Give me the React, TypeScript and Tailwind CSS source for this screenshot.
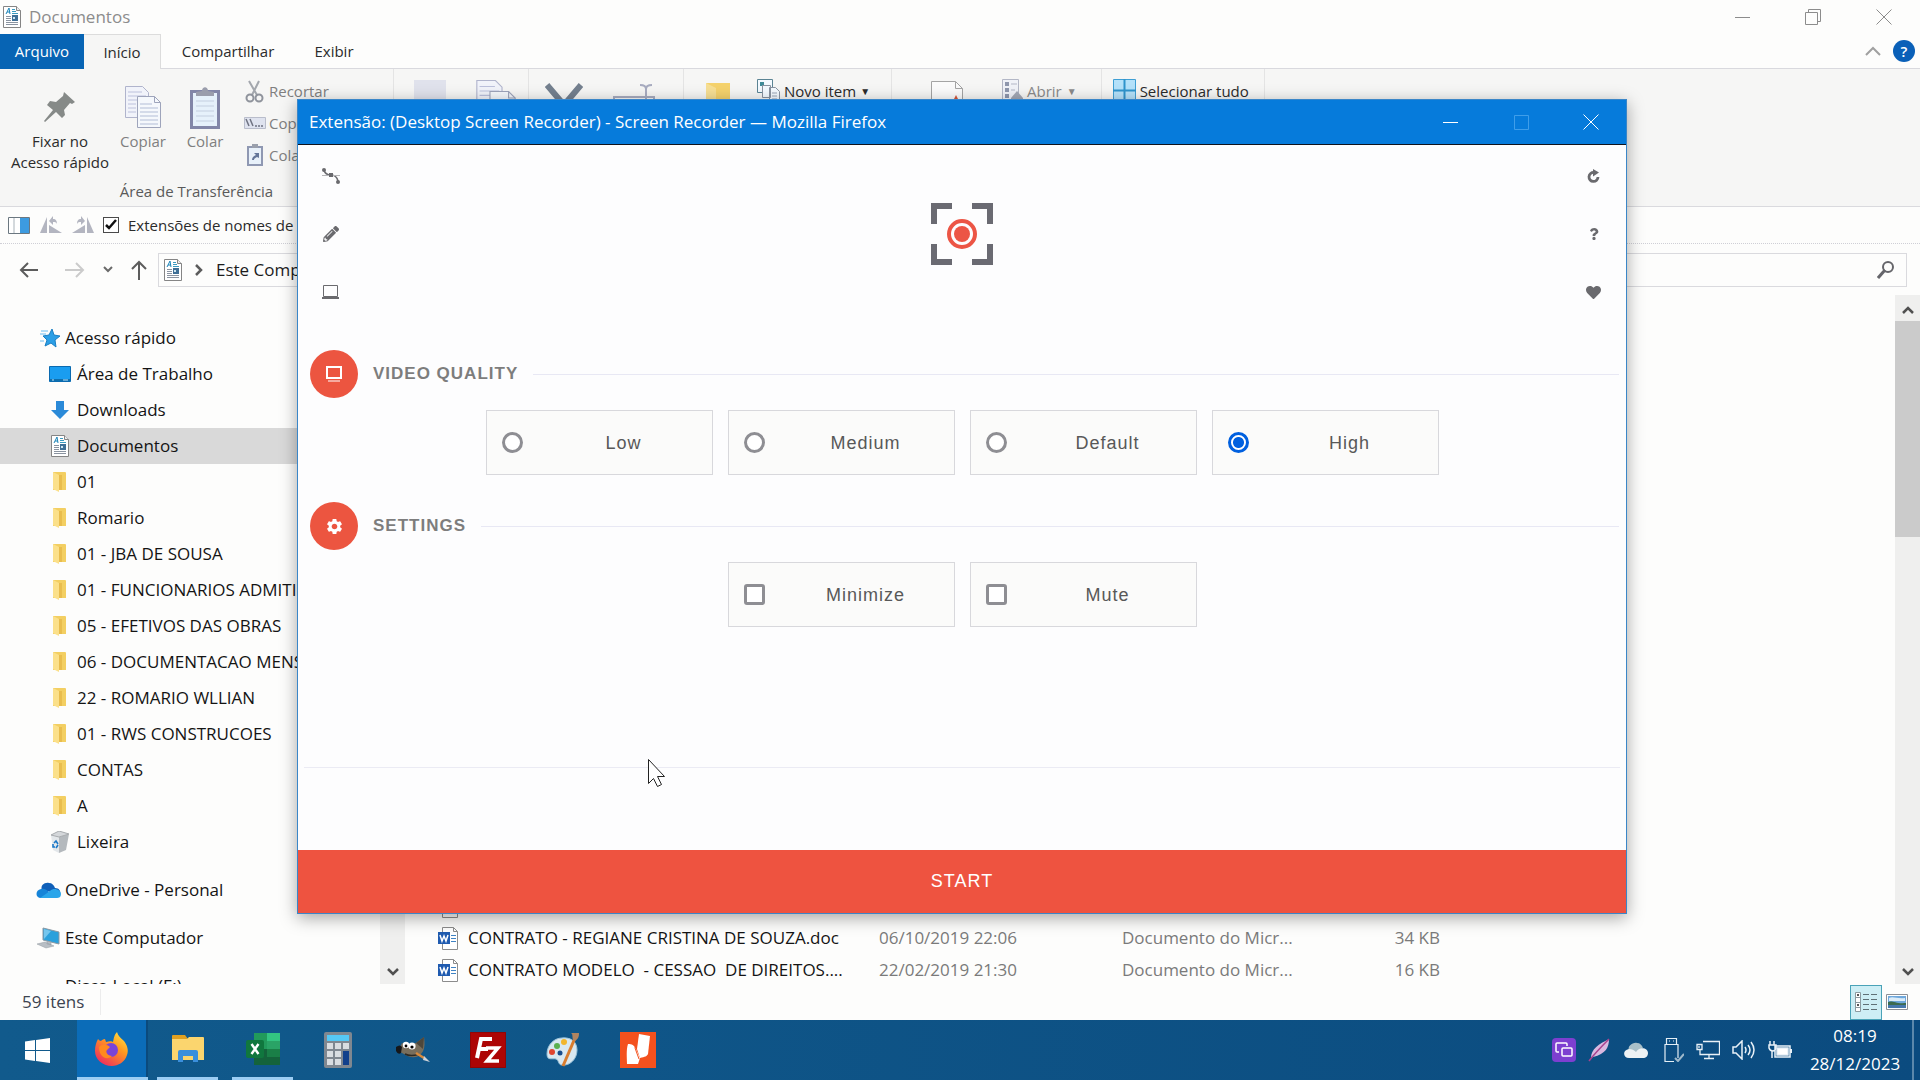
import { useState } from 'react'
import type { ReactNode } from 'react'
import { FaHeart, FaPencilAlt, FaQuestion } from 'react-icons/fa'
import { MdSettings } from 'react-icons/md'

const UI_FONT = "font-['Open_Sans','Noto_Sans',sans-serif]"
const WEB_FONT = "font-['Liberation_Sans',Arial,sans-serif]"

function DocIcon() {
  return (
    <svg width="18" height="22" viewBox="0 0 18 22" className="shrink-0">
      <path d="M.5.5h13l4 4v17H.5z" fill="#fff" stroke="#858585" />
      <path d="M13.5.5v4h4" fill="#eee" stroke="#858585" />
      <path d="M3 8l3-6 1 6M4 6h3" stroke="#1b84b8" fill="none" />
      <path d="M9 3.500h3M9 5.500h4M9 7.500h6" stroke="#3a9ac0" />
      <path d="M3 10.500h5M3 12.500h5M3 14.500h5M3 16.500h12M3 18.500h12" stroke="#8a93a0" />
      <path d="M9 9h6v6H9z" fill="#3f6f96" />
      <path d="M10 11h2v2h-2z" fill="#cfe6f0" />
    </svg>
  )
}

function FolderIcon() {
  return (
    <svg width="22" height="22" viewBox="0 0 22 22" className="shrink-0">
      <path d="M4 1h12a1 1 0 0 1 1 1v17H4z" fill="#f3cf62" />
      <path d="M4 1l6 3v17l-6-3z" fill="#fbe08a" />
      <path d="M10 4h3v15h-3z" fill="#e9bd4e" />
    </svg>
  )
}

function StarIcon() {
  return (
    <svg width="20" height="20" viewBox="0 0 20 20" className="shrink-0">
      <path d="M12 1l2 6 6 1-5 4 1 7-5-4-6 3 2-6-4-4 6-1z" fill="#2b9fe6" stroke="#1a7fc4" />
      <path d="M1 3h7M0 6h6M0 13h4" stroke="#6bbcf0" />
    </svg>
  )
}

function DesktopIcon() {
  return (
    <svg width="22" height="17" viewBox="0 0 22 17" className="shrink-0">
      <path d="M.5.5h21v15H.5z" fill="#1a9df0" stroke="#0a6ab0" />
      <path d="M1 13h20v2H1z" fill="#0d6fae" />
      <path d="M3 14h2M14 14h5" stroke="#bfe4fb" />
    </svg>
  )
}

function DownloadIcon() {
  return (
    <svg width="20" height="20" viewBox="0 0 20 20" className="shrink-0">
      <path d="M6 1h8v9h5l-9 9-9-9h5z" fill="#2b8ad8" />
    </svg>
  )
}

function BinIcon() {
  return (
    <svg width="22" height="22" viewBox="0 0 22 22" className="shrink-0">
      <path d="M2 4l8 2v16l-6-3z" fill="#e3e7ea" />
      <path d="M10 6l10-3-3 16-7 3z" fill="#b4b9bd" />
      <path d="M2 4l8-4 10 3-10 3z" fill="#d4d7da" stroke="#a7abae" />
      <path d="M5 12l2-2 2 3M4 13v3h2M9 14l-2 3" stroke="#1a78c8" strokeWidth="1.600" fill="none" />
    </svg>
  )
}

function CloudIcon() {
  return (
    <svg width="25" height="17" viewBox="0 0 25 17" className="shrink-0">
      <path d="M6 8C4 3 9 0 13 1c3 0 5 2 6 5 4 0 6 3 5 6z" fill="#0f5fb8" />
      <path d="M5 16C-1 16-1 8 5 7c3-1 6 1 8 3l-3 6z" fill="#1684d8" />
      <path d="M4 16l10-7c4-4 11-1 11 3 0 3-2 4-4 4z" fill="#2aa5ea" />
    </svg>
  )
}

function ComputerIcon() {
  return (
    <svg width="24" height="22" viewBox="0 0 24 22" className="shrink-0">
      <path d="M7 1l16 4v12L7 13z" fill="#2aa0dc" stroke="#8b98a3" />
      <path d="M8 2l7 2-7 8z" fill="#74c6ee" />
      <path d="M1 17l8-2 9 4-8 2zM11 14l4 1v3l-4-1z" fill="#b8bec4" stroke="#929aa1" strokeWidth=".5" />
    </svg>
  )
}

function WordIcon() {
  return (
    <svg width="21" height="23" viewBox="0 0 21 23" className="shrink-0">
      <path d="M4.500.5h11l4 4v18h-15z" fill="#fff" stroke="#8c8c8c" />
      <path d="M15.500.5v4h4" fill="none" stroke="#8c8c8c" />
      <path d="M13 8.500h5M13 11.500h5M13 14.500h5" stroke="#3f83c4" />
      <path d="M0 5h12v12H0z" fill="#1f5bb0" />
      <path d="M2 8l2 6 2-5 2 5 2-6" stroke="#fff" strokeWidth="1.500" fill="none" />
    </svg>
  )
}

function PageStack({ size }: { size: number }) {
  return (
    <svg width={size} height={size + 6} viewBox="0 0 36 42" className="shrink-0">
      <path d="M.5.5h17l6 6v25H.5z" fill="#f1f3fa" stroke="#b0b4cc" />
      <path d="M3 6h14M3 10h18M3 14h10M3 18h8M3 22h8M3 26h8" stroke="#bcc1dc" />
      <path d="M12.500 10.500h17l6 6v25h-23z" fill="#f5f8fc" stroke="#9ea4bb" />
      <path d="M29.500 10.500v6h6" fill="none" stroke="#9ea4bb" />
      <path d="M15 18h12M15 22h18M15 26h18M15 30h18M15 34h18M15 38h18" stroke="#b2bdd6" />
    </svg>
  )
}

function PinIcon() {
  return (
    <svg width="32" height="32" viewBox="0 0 32 32">
      <path d="M20 1l11 10-3 2-2-1-6 7 1 5-3 3-6-6L1 31l-1-1 9-11-6-5 3-4 6 1 7-6z" fill="#868a88" />
    </svg>
  )
}

function ClipboardIcon() {
  return (
    <svg width="30" height="43" viewBox="0 0 30 43">
      <path d="M1.500 5.500h27v36h-27z" fill="#e6f1fb" stroke="#8286a8" strokeWidth="3" />
      <path d="M6 15h18M6 20h18M6 25h18M6 30h18M6 35h18" stroke="#c4cfe0" />
      <path d="M6 10V6l6-1c0-5 6-5 6 0l6 1v4z" fill="#9a9dac" />
    </svg>
  )
}

function ScissorsIcon() {
  return (
    <svg width="20" height="23" viewBox="0 0 20 23" fill="none">
      <path d="M4 1l8 14M14 1L7 15" stroke="#a3a7ad" strokeWidth="2" />
      <circle cx="5" cy="18" r="3.500" stroke="#8f939c" strokeWidth="2" />
      <circle cx="14" cy="18" r="3.500" stroke="#8f939c" strokeWidth="2" />
    </svg>
  )
}

function PathIcon() {
  return (
    <svg width="22" height="12" viewBox="0 0 22 12">
      <path d="M.5.500h21v11H.5z" fill="#dfe3ef" stroke="#b9bdcb" />
      <path d="M2 2l3 7M6 2l3 7M11 9h2M14 9h2M17 9h2" stroke="#6f7382" strokeWidth="1.500" />
    </svg>
  )
}

function ShortcutIcon() {
  return (
    <svg width="16" height="22" viewBox="0 0 16 22">
      <path d="M1 3h14v18H1z" fill="#e8f1fa" stroke="#8f98b2" strokeWidth="2" />
      <path d="M5 0h6v4H5z" fill="#9aa0ac" />
      <path d="M5 16c0-3 2-4 4-5L7 9h5v5l-2-1c-2 1-3 2-3 3z" fill="#65779a" />
    </svg>
  )
}

function MinimizeGlyph() {
  return (
    <svg width="16" height="16" viewBox="0 0 16 16" stroke="currentColor">
      <path d="M0 8.500h15" />
    </svg>
  )
}

function CloseGlyph() {
  return (
    <svg width="16" height="16" viewBox="0 0 16 16" stroke="currentColor">
      <path d="M.5.500l15 15M15.500.500l-15 15" />
    </svg>
  )
}

function Chevron({ up = false }: { up?: boolean }) {
  return (
    <svg width="12" height="10" viewBox="0 0 12 10" fill="none" stroke="#505050" strokeWidth="2.500">
      <path d={up ? 'M1 8l5-5 5 5' : 'M1 2l5 5 5-5'} />
    </svg>
  )
}

/* ---------- Explorer ---------- */

function TitleBar() {
  return (
    <header className="flex h-[34px] shrink-0 items-center pl-[3px] text-[#8c8c8c]">
      <DocIcon />
      <h1 className="pl-2 text-[17px] leading-6">Documentos</h1>
      <div className="ml-auto flex h-full">
        <button aria-label="Minimizar" className="flex w-[70px] items-center justify-center"><MinimizeGlyph /></button>
        <button aria-label="Restaurar" className="flex w-[70px] items-center justify-center">
          <svg width="16" height="16" viewBox="0 0 16 16" fill="none" stroke="currentColor">
            <path d="M.5 3.500h12v12H.5zM3.500 3.500v-3h12v12h-3" />
          </svg>
        </button>
        <button aria-label="Fechar" className="flex w-[72px] items-center justify-center"><CloseGlyph /></button>
      </div>
    </header>
  )
}

function Tabs() {
  return (
    <nav className="flex h-[35px] shrink-0 text-[15px] text-[#2b2b2b]">
      <button className="w-[84px] bg-[#0764b4] text-white">Arquivo</button>
      <button className="w-[77px] border-t border-r border-[#dcdcdc] bg-[#f6f6f5]">Início</button>
      <div className="flex flex-1 items-center border-b border-[#d9d9de]">
        <button className="w-[134px]">Compartilhar</button>
        <button className="w-[78px]">Exibir</button>
        <div className="ml-auto flex items-center gap-3 pr-[5px]">
          <button aria-label="Minimizar a faixa de opções">
            <svg width="16" height="10" viewBox="0 0 16 10" fill="none" stroke="#a0a0a0" strokeWidth="2">
              <path d="M1 9l7-7 7 7" />
            </svg>
          </button>
          <button aria-label="Ajuda" className="size-[22px] rounded-full bg-[#0a60b8] font-semibold leading-[22px] text-white">?</button>
        </div>
      </div>
    </nav>
  )
}

function RibbonButton({ icon, label, className }: { icon: ReactNode; label: string; className: string }) {
  return (
    <button className={`flex flex-col items-center pt-1 leading-[21px] ${className}`}>
      <span className="flex h-[48px] items-center">{icon}</span>
      <span>{label}</span>
    </button>
  )
}

function Ribbon() {
  return (
    <section className="flex h-[138px] shrink-0 items-stretch border-b border-[#dadade] bg-[#f6f6f5] text-[15px] text-[#2b2b2b]">
      <div className="flex w-[394px] shrink-0 flex-col border-r border-[#e4e4e4]">
        <div className="flex flex-1 pt-[10px]">
          <RibbonButton icon={<PinIcon />} label="Fixar no Acesso rápido" className="w-[120px] px-2" />
          <RibbonButton icon={<PageStack size={36} />} label="Copiar" className="w-[46px] text-[#7f7f7f]" />
          <RibbonButton icon={<ClipboardIcon />} label="Colar" className="w-[78px] text-[#7f7f7f]" />
          <div className="flex flex-col gap-2 text-[#7f7f7f]">
            <button className="flex h-6 items-center gap-[3px]"><span className="flex w-[22px] justify-center"><ScissorsIcon /></span>Recortar</button>
            <button className="flex h-6 items-center gap-[3px]"><span className="flex w-[22px] justify-center"><PathIcon /></span>Copiar</button>
            <button className="flex h-6 items-center gap-[3px]"><span className="flex w-[22px] justify-center"><ShortcutIcon /></span>Colar</button>
          </div>
        </div>
        <p className="pb-1 text-center leading-[21px] text-[#5a5a5a]">Área de Transferência</p>
      </div>
      <div className="flex items-start gap-[30px] border-r border-[#e4e4e4] pl-5 pr-3 pt-[11px]">
        <span className="h-6 w-8 bg-[#e0e2ec]" />
        <PageStack size={40} />
      </div>
      <div className="flex items-start gap-[30px] border-r border-[#e4e4e4] pl-4 pr-7 pt-[14px]">
        <svg width="38" height="36" viewBox="0 0 38 36" fill="none" stroke="#74808f" strokeWidth="6">
          <path d="M2 2l17 20L36 2" />
        </svg>
        <svg width="42" height="36" viewBox="0 0 42 36" fill="none" stroke="#a8acc0" strokeWidth="2">
          <path d="M1 30V14h40v16M27 2c3 0 6 1 6 4 0-3 3-4 6-4M33 6v26" />
          <path d="M4 17h22v14H4z" fill="#dfe6f2" stroke="none" />
        </svg>
      </div>
      <div className="flex items-start border-r border-[#e4e4e4] pl-[22px] pt-[10px]">
        <svg width="26" height="30" viewBox="0 0 26 30" className="mt-1">
          <path d="M0 0h24v30H5z" fill="#f5d26c" />
          <path d="M0 0l10 5v25l-10-5z" fill="#f7df94" />
        </svg>
        <button className="ml-[25px] flex w-[134px] items-start gap-1 leading-6">
          <svg width="23" height="24" viewBox="0 0 23 24" fill="#f4faff">
            <path d="M.5.500h15v13H.5z" stroke="#5b8494" />
            <path d="M3 3h4v4H3z" fill="#3f8b98" />
            <path d="M5.500 6.500h8v12h-8zM12.500 8.500h6l4 4v11h-10z" stroke="#8a93a0" />
            <path d="M15 14h5M15 17h5M15 20h5" stroke="#9aa6b8" />
          </svg>
          Novo item <span className="text-[10px]">▼</span>
        </button>
      </div>
      <div className="flex items-start border-r border-[#e4e4e4] pl-[38px] pr-6 pt-[10px]">
        <svg width="34" height="36" viewBox="0 0 34 36" className="mt-[2px] mr-[38px]">
          <path d="M1.500.500h24l7 7v28h-31z" fill="#fbfbfb" stroke="#a4a4a4" />
          <path d="M25.500.500v7h7" fill="none" stroke="#a4a4a4" />
          <path d="M24 18l2-4 2 4z" fill="#d5583c" />
        </svg>
        <button className="flex items-start gap-[3px] leading-6 text-[#8a8a8a]">
          <svg width="22" height="24" viewBox="0 0 22 24">
            <path d="M.5.500h16v23H.5z" fill="#f0f2f8" stroke="#b3b7c6" />
            <path d="M3 3h4v4H3zM3 9h4v4H3zM3 15h4v4H3z" fill="#8f97ad" />
            <path d="M9 5h6M9 11h4" stroke="#b3b7c6" />
            <path d="M9 19l6-7 6 7v4H9z" fill="#a3a8b5" />
          </svg>
          Abrir <span className="pl-[2px] text-[10px]">▼</span>
        </button>
      </div>
      <div className="flex items-start border-r border-[#e4e4e4] pt-[10px] pr-[15px] pl-[11px]">
        <button className="flex items-start gap-1 leading-6">
          <svg width="23" height="23" viewBox="0 0 23 23">
            <path d="M.5.500h22v22H.5z" fill="#b4e1fa" stroke="#3f9fd4" />
            <path d="M11.500 0v23M0 11.500h23" stroke="#2f94cc" strokeWidth="2" />
          </svg>
          Selecionar tudo
        </button>
      </div>
    </section>
  )
}

function QuickAccessBar() {
  const [extensions, setExtensions] = useState(true)
  return (
    <div className="flex h-[37px] shrink-0 items-center border-b border-dotted border-[#cfcfd6] pl-2 text-[15px] text-[#2b2b2b]">
      <svg width="22" height="17" viewBox="0 0 22 17">
        <path d="M.5.500h21v16H.5z" fill="#fff" stroke="#6b7780" />
        <path d="M6 1v15" stroke="#a9b3ba" />
        <path d="M12 1h9v15h-9z" fill="#3d9be0" />
      </svg>
      <svg width="22" height="18" viewBox="0 0 22 18" className="ml-[10px]" fill="#b3b5c0">
        <path d="M0 17L7 1v16zM9 17V9l13 8zM9 5l4-5v3c3 0 4 2 4 5-1-2-2-2-4-2v3z" />
      </svg>
      <svg width="22" height="18" viewBox="0 0 22 18" className="ml-[10px] mr-[9px]" fill="#b3b5c0">
        <path d="M22 17L15 1v16zM13 17V9L0 17zM13 5L9 0v3C6 3 5 5 5 8c1-2 2-2 4-2v3z" />
      </svg>
      <label className="flex items-center gap-[9px]">
        <span className="relative flex size-4 items-center justify-center">
          <input
            type="checkbox"
            checked={extensions}
            onChange={(e) => setExtensions(e.target.checked)}
            className="size-4 appearance-none border border-[#4a4a4a] bg-white"
          />
          {extensions && (
            <svg width="12" height="12" viewBox="0 0 12 12" className="pointer-events-none absolute" fill="none" stroke="#111" strokeWidth="2.500">
              <path d="M1 6l3 3 7-8" />
            </svg>
          )}
        </span>
        Extensões de nomes de arquivos
      </label>
    </div>
  )
}

function AddressBar() {
  return (
    <div className="flex h-[51px] shrink-0 items-center gap-3 pr-[13px] text-[17px] text-[#1c1c1c]">
      <div className="flex w-[146px] shrink-0 items-center pl-[19px] text-[#606060]">
        <button aria-label="Voltar">
          <svg width="20" height="16" viewBox="0 0 20 16" fill="none" stroke="#5c5c5c" strokeWidth="2"><path d="M19 8H2M9 1L2 8l7 7" /></svg>
        </button>
        <button aria-label="Avançar" className="ml-[26px]">
          <svg width="20" height="16" viewBox="0 0 20 16" fill="none" stroke="#cbcbcb" strokeWidth="2"><path d="M0 8h18M11 1l7 7-7 7" /></svg>
        </button>
        <button aria-label="Locais recentes" className="ml-[18px]">
          <svg width="10" height="7" viewBox="0 0 10 7" fill="none" stroke="#6a6a6a" strokeWidth="2"><path d="M1 1l4 4 4-4" /></svg>
        </button>
        <button aria-label="Acima" className="ml-[18px]">
          <svg width="16" height="20" viewBox="0 0 16 20" fill="none" stroke="#5c5c5c" strokeWidth="2"><path d="M8 20V2M1 9l7-7 7 7" /></svg>
        </button>
      </div>
      <div className="flex h-[34px] flex-1 items-center border border-[#dadade] pl-[5px]">
        <DocIcon />
        <svg width="8" height="12" viewBox="0 0 8 12" className="mx-[13px]" fill="none" stroke="#5c5c5c" strokeWidth="2.500"><path d="M1 1l5 5-5 5" /></svg>
        <span>Este Computador</span>
      </div>
      <div className="flex h-[34px] w-[400px] items-center border border-[#dadade] pr-[11px]">
        <input type="text" aria-label="Pesquisar" className="h-full min-w-0 flex-1 bg-transparent outline-none" />
        <svg width="18" height="18" viewBox="0 0 18 18" fill="none" stroke="#65656a">
          <circle cx="11" cy="6" r="5" strokeWidth="2" />
          <path d="M8 9l-7 8" strokeWidth="3" />
        </svg>
      </div>
    </div>
  )
}

const pinned: { label: string; icon: ReactNode; active?: boolean }[] = [
  { label: 'Área de Trabalho', icon: <DesktopIcon /> },
  { label: 'Downloads', icon: <DownloadIcon /> },
  { label: 'Documentos', icon: <DocIcon />, active: true },
  { label: '01', icon: <FolderIcon /> },
  { label: 'Romario', icon: <FolderIcon /> },
  { label: '01 - JBA DE SOUSA', icon: <FolderIcon /> },
  { label: '01 - FUNCIONARIOS ADMITIDOS', icon: <FolderIcon /> },
  { label: '05 - EFETIVOS DAS OBRAS', icon: <FolderIcon /> },
  { label: '06 - DOCUMENTACAO MENSAL', icon: <FolderIcon /> },
  { label: '22 - ROMARIO WLLIAN', icon: <FolderIcon /> },
  { label: '01 - RWS CONSTRUCOES', icon: <FolderIcon /> },
  { label: 'CONTAS', icon: <FolderIcon /> },
  { label: 'A', icon: <FolderIcon /> },
  { label: 'Lixeira', icon: <BinIcon /> },
]

function RootItem({ icon, label }: { icon?: ReactNode; label: string }) {
  return (
    <button className="flex h-9 w-full shrink-0 items-center pl-9 text-left whitespace-nowrap">
      <span className="flex w-[29px] items-center">{icon}</span>
      {label}
    </button>
  )
}

function Sidebar() {
  return (
    <aside className="flex w-[380px] shrink-0 flex-col gap-3 overflow-hidden pt-[25px] text-[17px] text-[#141414]">
      <div>
        <RootItem icon={<span className="pl-1"><StarIcon /></span>} label="Acesso rápido" />
        {pinned.map((item) => (
          <button
            key={item.label}
            className={`flex h-9 w-full items-center pl-12 text-left whitespace-nowrap ${item.active ? 'bg-[#d9d9d9]' : ''}`}
          >
            <span className="flex w-[29px] shrink-0 items-center pr-[5px] justify-center">{item.icon}</span>
            {item.label}
          </button>
        ))}
      </div>
      <RootItem icon={<CloudIcon />} label="OneDrive - Personal" />
      <RootItem icon={<ComputerIcon />} label="Este Computador" />
      <RootItem label="Disco Local (E:)" />
    </aside>
  )
}

const files = [
  { name: '', date: '', type: '', size: '' },
  { name: 'CONTRATO - REGIANE CRISTINA DE SOUZA.doc', date: '06/10/2019 22:06', type: 'Documento do Micr...', size: '34 KB' },
  { name: 'CONTRATO MODELO  - CESSAO  DE DIREITOS....', date: '22/02/2019 21:30', type: 'Documento do Micr...', size: '16 KB' },
]

function FileList() {
  return (
    <main className="flex-1 overflow-hidden pt-[595px] pl-[33px]">
      <table className="table-fixed text-[17px] whitespace-pre">
        <tbody>
          {files.map((f, i) => (
            <tr key={i} className="h-8 text-[#7a7a7a]">
              <td className="w-[30px] p-0"><WordIcon /></td>
              <td className="w-[411px] p-0 text-[#141414]">{f.name}</td>
              <td className="w-[243px] p-0">{f.date}</td>
              <td className="w-[218px] p-0">{f.type}</td>
              <td className="w-[100px] p-0 text-right">{f.size}</td>
            </tr>
          ))}
        </tbody>
      </table>
    </main>
  )
}

function StatusBar() {
  return (
    <footer className="flex h-9 shrink-0 items-center pl-[22px] pr-3 text-[17px] text-[#3c4450]">
      <span className="border-r border-[#ececec] pr-4">59 itens</span>
      <div className="ml-auto flex items-center gap-1">
        <button aria-label="Detalhes" className="flex h-[35px] w-8 items-center justify-center border border-[#4aa3b8] bg-[#cdeef5]">
          <svg width="22" height="20" viewBox="0 0 22 20" fill="#fff" stroke="#8b9aa0">
            <path d="M.5.500h5v19h-5zM.5 5.500h5M.5 10.500h5M.5 15.500h5" />
            <path d="M8 2.500h6M16 2.500h6M8 7.500h6M16 7.500h6M8 12.500h6M16 12.500h6M8 17.500h6M16 17.500h6" stroke="#5f7076" />
            <path d="M2 2h2v2H2zM2 12h2v2H2z" fill="#555" stroke="none" />
          </svg>
        </button>
        <button aria-label="Miniaturas">
          <svg width="22" height="17" viewBox="0 0 22 17">
            <path d="M.5.500h21v15H.5z" fill="#fff" stroke="#8d9096" />
            <path d="M2 2h18v12H2z" fill="#6fa8dc" />
            <path d="M3 4c4-2 8 1 16 0v3H3z" fill="#dcecf8" />
            <path d="M2 8c5-2 7 2 18 1v2H2z" fill="#3d6b4f" />
            <path d="M2 11h18v3H2z" fill="#4678ad" />
          </svg>
        </button>
      </div>
    </footer>
  )
}

function Explorer() {
  return (
    <div className="flex min-h-0 flex-1 flex-col">
      <TitleBar />
      <Tabs />
      <Ribbon />
      <QuickAccessBar />
      <AddressBar />
      <div className="flex min-h-0 flex-1">
        <Sidebar />
        <div className="flex w-[25px] shrink-0 items-end justify-center bg-[#efefee] pb-[7px]"><Chevron /></div>
        <FileList />
        <div className="flex w-[25px] shrink-0 flex-col items-center bg-[#efefee]">
          <div className="flex h-[26px] items-center pt-1"><Chevron up /></div>
          <div className="h-[216px] w-full bg-[#cbcbcb]" />
          <div className="mt-auto pb-[7px]"><Chevron /></div>
        </div>
      </div>
      <StatusBar />
    </div>
  )
}

/* ---------- Recorder window ---------- */

function Section({ icon, title, children }: { icon: ReactNode; title: string; children: ReactNode }) {
  return (
    <section className="flex flex-col gap-3">
      <h2 className="flex items-center gap-[15px] text-[17px] font-bold tracking-[1px] text-[#7d7d7d]">
        <span className="flex size-12 items-center justify-center rounded-full bg-[#ec5540] text-white">{icon}</span>
        {title}
        <span className="h-px flex-1 bg-[#e8e8f4]" />
      </h2>
      <div className="flex justify-center gap-[15px] pr-1">{children}</div>
    </section>
  )
}

function Option({ type, label, checked, onChange }: { type: 'radio' | 'checkbox'; label: string; checked: boolean; onChange: () => void }) {
  return (
    <label className="flex h-[65px] w-[227px] items-center gap-3 border border-[#d8d8dc] bg-[#fbfbfa] pl-[15px] text-[18px] tracking-[1px] text-[#585858]">
      {type === 'radio' ? (
        <input
          type="radio"
          name="quality"
          checked={checked}
          onChange={onChange}
          className="size-[21px] appearance-none rounded-full border-[3px] border-[#8e8e93] bg-white checked:border-[#0060df] checked:bg-[radial-gradient(circle,#0060df_5px,#fff_6px)]"
        />
      ) : (
        <input
          type="checkbox"
          checked={checked}
          onChange={onChange}
          className="size-[21px] appearance-none rounded-[3px] border-[3px] border-[#8e8e93] bg-white checked:bg-[#0060df]"
        />
      )}
      <span className="flex-1 pt-[2px] text-center">{label}</span>
    </label>
  )
}

function RecorderWindow() {
  const [quality, setQuality] = useState('High')
  const [minimize, setMinimize] = useState(false)
  const [mute, setMute] = useState(false)

  return (
    <div
      role="dialog"
      aria-label="Screen Recorder"
      className="absolute top-[99px] right-[293px] bottom-[166px] left-[297px] flex flex-col border border-[#3a86c8] bg-[#fdfdfe] shadow-[0_4px_16px_rgba(0,0,0,0.35)]"
    >
      <div className="flex h-[45px] shrink-0 items-center border-b border-[#10131c] bg-[#067bdb] text-white">
        <h2 className="pl-[11px] text-[17px]">Extensão: (Desktop Screen Recorder) - Screen Recorder — Mozilla Firefox</h2>
        <div className="ml-auto flex h-full">
          <button aria-label="Minimizar" className="flex w-[70px] items-center justify-center"><MinimizeGlyph /></button>
          <button aria-label="Maximizar" disabled className="flex w-[70px] items-center justify-center text-[#3f9eea]">
            <svg width="15" height="15" viewBox="0 0 15 15" fill="none" stroke="currentColor"><path d="M.5.500h14v14H.5z" /></svg>
          </button>
          <button aria-label="Fechar" className="flex w-[70px] items-center justify-center"><CloseGlyph /></button>
        </div>
      </div>

      <div className={`flex min-h-0 flex-1 flex-col tracking-normal ${WEB_FONT}`}>
        <div className="flex h-[205px] shrink-0 justify-between px-[11px] text-[#6a6a6e]">
          <div className="flex flex-col pt-[2px]">
            <button aria-label="Vector" className="flex h-[58px] w-[43px] items-center justify-center">
              <svg width="18" height="16" viewBox="0 0 18 16" fill="currentColor">
                <path d="M2 2c1 4 3 5 7 5s6 2 7 6" fill="none" stroke="currentColor" strokeWidth="1.500" />
                <path d="M0 7.500h18" stroke="#b5b5b8" />
                <circle cx="2" cy="2" r="2" /><circle cx="16" cy="14" r="2" />
                <path d="M7 5h4v4H7z" />
              </svg>
            </button>
            <button aria-label="Edit" className="flex h-[58px] w-[43px] items-center justify-center"><FaPencilAlt size={16} /></button>
            <button aria-label="Window" className="flex h-[58px] w-[43px] items-center justify-center">
              <svg width="17" height="15" viewBox="0 0 17 15" fill="none" stroke="currentColor">
                <path d="M1.500.500h14v11h-14z" /><path d="M0 13h17" strokeWidth="2" />
              </svg>
            </button>
          </div>
          <svg width="62" height="62" viewBox="0 0 62 62" className="mt-[58px]">
            <path d="M3 21V3h18M41 3h18v18M59 41v18H41M21 59H3V41" fill="none" stroke="#6a6a72" strokeWidth="6" />
            <circle cx="31" cy="31" r="13" fill="none" stroke="#ec5545" strokeWidth="4" />
            <circle cx="31" cy="31" r="8" fill="#ec5545" />
          </svg>
          <div className="flex flex-col pt-[2px]">
            <button aria-label="Reload" className="flex h-[58px] w-[43px] items-center justify-center">
              <svg width="13" height="15" viewBox="0 0 13 15">
                <path d="M7 3.500a4.500 4.500 0 1 0 4 4.500" fill="none" stroke="currentColor" strokeWidth="2.800" />
                <path d="M6 0l6 3.500-6 4z" fill="currentColor" />
              </svg>
            </button>
            <button aria-label="Help" className="flex h-[58px] w-[43px] items-center justify-center"><FaQuestion size={12} /></button>
            <button aria-label="Donate" className="flex h-[58px] w-[43px] items-center justify-center"><FaHeart size={15} /></button>
          </div>
        </div>

        <div className="flex flex-col gap-[27px] pr-[7px] pl-3">
          <Section
            title="VIDEO QUALITY"
            icon={
              <svg width="16" height="16" viewBox="0 0 16 16" fill="none" stroke="currentColor">
                <path d="M1 1h14v11H1z" strokeWidth="2" /><path d="M2 15h12" />
              </svg>
            }
          >
            {['Low', 'Medium', 'Default', 'High'].map((q) => (
              <Option key={q} type="radio" label={q} checked={quality === q} onChange={() => setQuality(q)} />
            ))}
          </Section>
          <Section title="SETTINGS" icon={<MdSettings size={19} />}>
            <Option type="checkbox" label="Minimize" checked={minimize} onChange={() => setMinimize(!minimize)} />
            <Option type="checkbox" label="Mute" checked={mute} onChange={() => setMute(!mute)} />
          </Section>
        </div>

        <div className="mx-[6px] mt-auto h-[83px] shrink-0 border-t border-[#ebebf4]" />
        <button className="h-[63px] shrink-0 bg-[#ee5340] text-[18px] tracking-[1px] text-white">START</button>
      </div>
    </div>
  )
}

/* ---------- Taskbar ---------- */

function AppSlot({ label, open, active, children }: { label: string; open?: boolean; active?: boolean; children: ReactNode }) {
  return (
    <button aria-label={label} className="flex h-[60px] w-[75px] shrink-0 flex-col px-[2px]">
      <span className={`flex w-full flex-1 items-center justify-center ${active ? 'border-r-2 border-[#0b4a7c] bg-[#0b6cb8]' : ''}`}>{children}</span>
      {open && <span className={`h-[3px] self-stretch bg-[#9ccdf3] ${active ? '' : 'mx-[5px]'}`} />}
    </button>
  )
}

function Taskbar() {
  return (
    <nav className="flex h-[60px] shrink-0 bg-linear-to-r from-[#115a8c] to-[#0b4b7f] text-white">
      <AppSlot label="Iniciar">
        <svg width="25" height="25" viewBox="0 0 25 25" fill="#fff">
          <path d="M0 3.500l10-1.400v9.900H0zM11 2l14-2v12H11zM0 13h10v9.900L0 21.500zM11 13h14v12l-14-2z" />
        </svg>
      </AppSlot>
      <AppSlot label="Firefox" open active>
        <svg width="34" height="34" viewBox="0 0 34 34">
          <defs>
            <linearGradient id="fx" x1="1" y1="0" x2="0.300" y2="1">
              <stop offset="0" stopColor="#fff04a" /><stop offset=".45" stopColor="#ff9a20" /><stop offset="1" stopColor="#f0305c" />
            </linearGradient>
          </defs>
          <path d="M3 7c1 1 2 2 3 2 1-1 2-2 4-2l1 3c3-1 6-1 7 0 1-4 1-7 4-10 1 4 4 6 7 9 3 4 5 9 3 14-2 7-9 11-15 11C7 34 0 27 0 19c0-5 1-8 3-12z" fill="url(#fx)" />
          <circle cx="16" cy="18" r="7" fill="#7a44d8" />
          <path d="M4 15c3-3 8-3 11 0l-3 3c-2 2 1 6 5 6-5 5-13 1-13-9z" fill="#ff8a1e" />
        </svg>
      </AppSlot>
      <AppSlot label="Explorador de Arquivos" open>
        <svg width="32" height="27" viewBox="0 0 32 27">
          <path d="M0 1q0-1 1-1h12l3 4H0z" fill="#e0a020" />
          <path d="M0 4h15l2-2h14q1 0 1 1v22H0z" fill="#fbd56e" />
          <path d="M6 27V17q0-2 2-2h16q2 0 2 2v10h-5v-6H11v6z" fill="#3a8fdc" />
        </svg>
      </AppSlot>
      <AppSlot label="Excel" open>
        <svg width="34" height="32" viewBox="0 0 34 32">
          <path d="M8 0h13v16H8z" fill="#219a5b" /><path d="M21 0h13v16H21z" fill="#33c481" />
          <path d="M8 16h26v16H8z" fill="#14633b" /><path d="M21 8h13v8H21z" fill="#2aa366" />
          <path d="M21 16h13v8H21z" fill="#1a7f47" />
          <rect y="7" width="18" height="18" rx="2" fill="#10773e" />
          <path d="M5.500 11l7 10M12.500 11l-7 10" stroke="#fff" strokeWidth="2.400" />
        </svg>
      </AppSlot>
      <AppSlot label="Calculadora">
        <svg width="28" height="36" viewBox="0 0 28 36">
          <rect width="28" height="36" rx="2" fill="#7f8790" />
          <path d="M3 3h22v6H3z" fill="#55c8f5" />
          <path d="M3 11h6v6H3zM11 11h6v6h-6zM19 11h6v6h-6zM3 19h6v6H3zM11 19h6v6h-6zM3 27h6v6H3zM11 27h6v6h-6z" fill="#d9dde1" />
          <path d="M19 19h6v14h-6z" fill="#12408c" />
        </svg>
      </AppSlot>
      <AppSlot label="GIMP">
        <svg width="34" height="26" viewBox="0 0 34 26">
          <path d="M6 6l3 1c4 0 8 0 11-1l8-6c1 7 1 14-4 18-5 4-12 2-16-1l-6-3z" fill="#786e5c" />
          <path d="M20 6l8-6-1 12z" fill="#4e473b" />
          <path d="M0 10q4-3 6 0l-1 6q-3 2-5-2z" fill="#15171a" />
          <circle cx="10" cy="8" r="3.200" fill="#fff" /><circle cx="16" cy="9" r="3.600" fill="#fff" />
          <circle cx="10" cy="9" r="1.400" /><circle cx="16" cy="10" r="1.600" />
          <path d="M9 17c6 3 11 1 14 0" stroke="#2d2a24" strokeWidth="1.500" fill="none" />
          <path d="M20 16l8 5" stroke="#d88a3c" strokeWidth="2.500" /><path d="M28 19l6 6-7-2z" fill="#cfd3d8" />
        </svg>
      </AppSlot>
      <AppSlot label="FileZilla">
        <svg width="36" height="36" viewBox="0 0 36 36">
          <path d="M0 0h36v36H0z" fill="#ad0505" />
          <path d="M.5.500h35v35H.5z" fill="none" stroke="#8f0606" />
          <path d="M7 26l4-19h11M9 17h9" stroke="#fff" strokeWidth="4" fill="none" />
          <path d="M16 16h12L17 29h12" stroke="#fff" strokeWidth="3.500" fill="none" />
        </svg>
      </AppSlot>
      <AppSlot label="Paint">
        <svg width="36" height="36" viewBox="0 0 36 36">
          <path d="M17 6c9-1 15 4 15 12 0 9-7 16-15 15-4 0-3-5-6-6-4-1-9 2-9-5C2 13 9 6 17 6z" fill="#d9e8f0" stroke="#9cc4da" />
          <circle cx="12" cy="14" r="3" fill="#5bb04f" /><circle cx="19" cy="10" r="3" fill="#f2b62c" />
          <circle cx="7" cy="20" r="3" fill="#e0452f" /><circle cx="15" cy="21" r="2.500" fill="#174d8c" />
          <path d="M18 34l12-28" stroke="#d97d2f" strokeWidth="3" />
          <path d="M28 8c-1-4 0-6-2-7h8c0 3 0 5-4 8z" fill="#b08460" />
        </svg>
      </AppSlot>
      <AppSlot label="Nitro">
        <svg width="36" height="36" viewBox="0 0 36 36">
          <path d="M0 0h36v36H0z" fill="#f4511e" />
          <path d="M19 2l11 2-2 18c-1 2-3 3-8 4l-3-9z" fill="#fff" />
          <path d="M8 12c4 0 6 1 8 5l4 9-2 6-11 0C7 26 6 18 8 12z" fill="#fff" />
          <path d="M16 11l-1 5 4 11" stroke="#f4511e" fill="none" />
        </svg>
      </AppSlot>

      <div className="ml-auto flex items-center">
        <div className="flex items-center gap-3 pr-[6px]">
          <svg width="24" height="24" viewBox="0 0 24 24" fill="none" stroke="#fff" strokeWidth="1.500">
            <rect width="24" height="24" rx="4" fill="#7d3fd0" stroke="none" />
            <path d="M7 14H5q-1 0-1-1V6q0-1 1-1h9q1 0 1 1v2" />
            <rect x="10" y="10" width="10" height="8" rx="1" />
          </svg>
          <svg width="24" height="24" viewBox="0 0 24 24">
            <path d="M3 20C3 11 11 6 21 1c0 8-3 15-16 18z" fill="#d9b8e0" />
            <path d="M1 23C7 15 13 9 21 1" stroke="#a8418e" strokeWidth="1.500" fill="none" />
          </svg>
          <svg width="24" height="17" viewBox="0 0 24 17">
            <path d="M5 9C3 4 9 0 13 1c3 0 5 2 6 5l-8 6z" fill="#a9c0c9" />
            <path d="M5 16c-6 0-7-8 0-9 3 0 5 1 7 3 4-6 12-4 12 1 0 3-2 5-5 5z" fill="#eef2f4" />
          </svg>
          <svg width="24" height="24" viewBox="0 0 24 24" fill="none" stroke="#e4eef5" strokeWidth="1.200">
            <path d="M6.500 6V.500h10V6M5 6.500h13V20M5 6v17.500h9M9 3h1M13 3h1" />
            <path d="M15 20l3 3 6-7" stroke="#9fb9cb" strokeWidth="2" />
          </svg>
          <svg width="24" height="20" viewBox="0 0 24 20" fill="none" stroke="#e9f1f7" strokeWidth="1.300">
            <path d="M7 1.500h16.500v13H4V10M1 4.500h5v5H1zM13 15v3M8 18.500h10M3 6v2" />
          </svg>
          <svg width="24" height="20" viewBox="0 0 24 20" fill="none" stroke="#e9f1f7" strokeWidth="1.500">
            <path d="M1 7h3l6-6v18l-6-6H1zM13 7q2 3 0 6M16 5q4 5 0 10M19 2q6 8 0 16" />
          </svg>
          <svg width="24" height="18" viewBox="0 0 24 18" fill="none" stroke="#e9f1f7" strokeWidth="1.500">
            <path d="M7 5h15v11H7zM23.500 8v4M2 0v4M6 0v4M1 4h7v3q-1 3-3 3-3 0-4-3zM4 10v7" />
            <path d="M9 7h11v7H9z" fill="#fff" />
          </svg>
        </div>
        <time className="w-[114px] text-center text-[17px] leading-7">
          08:19
          <br />
          28/12/2023
        </time>
        <span className="h-full w-[8px] border-l-2 border-[#5c88ab]" />
      </div>
    </nav>
  )
}

export default function App() {
  return (
    <div className={`relative flex h-screen flex-col overflow-hidden bg-[#fdfdfc] ${UI_FONT}`}>
      <Explorer />
      <Taskbar />
      <RecorderWindow />
      <svg width="20" height="28" viewBox="0 0 20 28" className="pointer-events-none absolute top-[759px] left-[648px]">
        <path d="M.5.500v24l5-5 4 8 4-2-4-8h7z" fill="#fff" stroke="#222" />
      </svg>
    </div>
  )
}
